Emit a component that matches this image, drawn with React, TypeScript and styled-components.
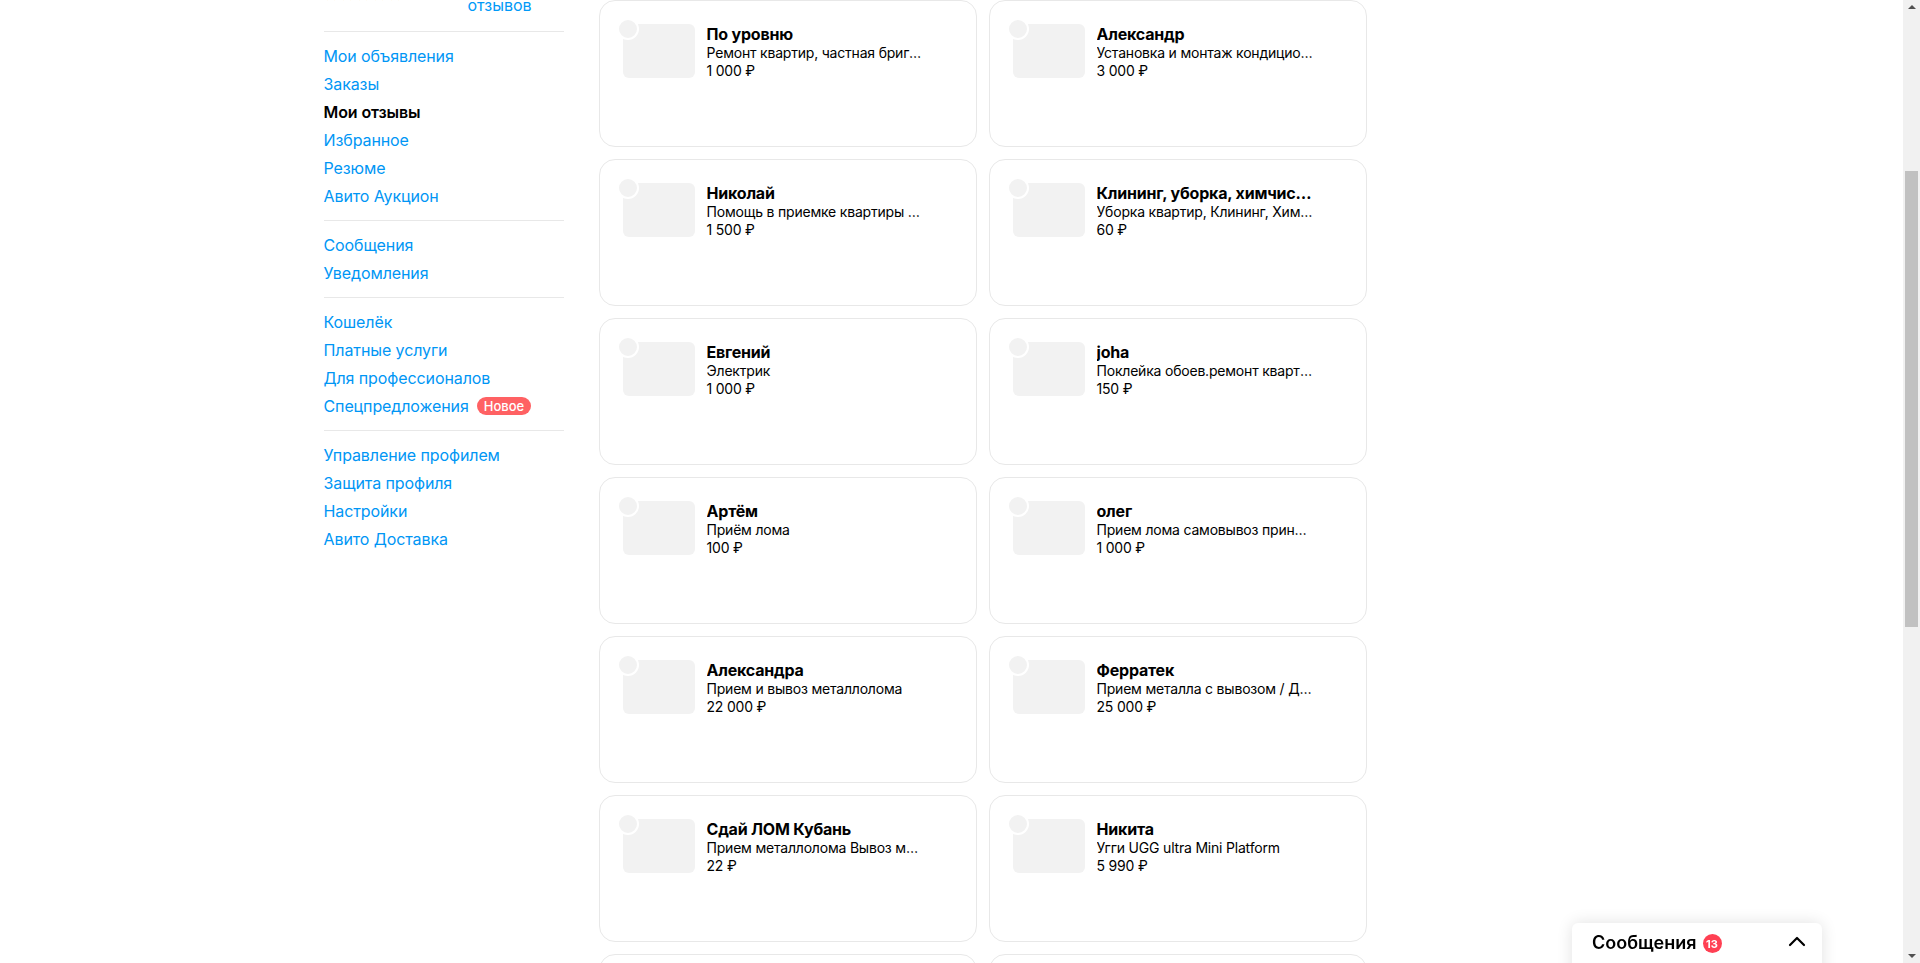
import React from 'react';
import styled, { createGlobalStyle } from 'styled-components';

const GlobalStyle = createGlobalStyle`
  html, body {
    margin: 0;
    padding: 0;
    background: #fff;
    overflow: hidden;
  }
  body {
    font-family: Inter, 'Noto Sans', 'Liberation Sans', sans-serif;
    color: #000;
  }
  * {
    box-sizing: border-box;
  }
`;

const Screen = styled.div`
  display: flex;
  height: 963px;
  overflow: hidden;
`;

const Page = styled.div`
  flex: 1;
  overflow: hidden;
`;

const Container = styled.div`
  width: 1256px;
  margin: 0 auto;
  display: flex;
  gap: 35px;
  align-items: flex-start;
`;

const Sidebar = styled.aside`
  width: 240px;
  flex: none;
`;

// rating block sits mostly above the visible part of the page
const ProfileTail = styled.div`
  display: grid;
  grid-template-columns: 144px 1fr;
  align-items: end;
  margin-top: -25px;
  padding-bottom: 16px;
`;

const Stars = styled.div`
  display: flex;
  gap: 2px;
  margin-bottom: 13px;
  color: #ffb021;
`;

const ReviewsLink = styled.a`
  font-size: 16px;
  line-height: 20px;
  color: #0099f7;
  text-decoration: none;
  display: block;
`;

const Divider = styled.hr`
  margin: 0;
  border: none;
  border-top: 1px solid #e8e8e8;
`;

const MenuSection = styled.ul`
  list-style: none;
  margin: 0;
  padding: 10px 0;
`;

const MenuItem = styled.li<{ $active?: boolean }>`
  display: flex;
  align-items: center;
  gap: 8px;
  height: 28px;
  font-size: 16px;
  line-height: 28px;
  color: ${p => (p.$active ? '#000' : '#0096f5')};
  font-weight: ${p => (p.$active ? 600 : 400)};
  letter-spacing: -0.1px;
  white-space: nowrap;
`;

const NewBadge = styled.span`
  display: inline-flex;
  align-items: center;
  height: 18px;
  padding: 0 7px;
  border-radius: 9px;
  background: #ff6163;
  color: #fff;
  font-size: 13px;
  font-weight: 500;
  line-height: 18px;
  letter-spacing: 0;
`;

const Grid = styled.div`
  display: grid;
  grid-template-columns: repeat(2, 378px);
  gap: 12px;
`;

const Card = styled.div`
  height: 147px;
  border: 1px solid #e8e8e8;
  border-radius: 16px;
  padding: 23px 23px;
  display: flex;
  align-items: flex-start;
  gap: 12px;
  background: #fff;
`;

const Thumb = styled.div`
  position: relative;
  width: 72px;
  height: 54px;
  flex: none;
  border-radius: 6px;
  background: #f2f2f2;
`;

const Avatar = styled.span`
  position: absolute;
  left: -6px;
  top: -6px;
  width: 22px;
  height: 22px;
  border-radius: 50%;
  background: #f2f2f2;
  border: 2px solid #fff;
`;

const Info = styled.div`
  width: 218px;
  min-width: 0;
  letter-spacing: -0.2px;
`;

const Title = styled.div`
  font-size: 16px;
  line-height: 20px;
  font-weight: 700;
  white-space: nowrap;
  overflow: hidden;
  text-overflow: ellipsis;
`;

const Subtitle = styled.div`
  font-size: 14px;
  line-height: 18px;
  white-space: nowrap;
  overflow: hidden;
  text-overflow: ellipsis;
`;

const Price = styled.div`
  font-size: 14px;
  line-height: 18px;
`;

const Scrollbar = styled.div`
  width: 17px;
  flex: none;
  background: #f1f1f1;
  position: relative;
  display: flex;
  flex-direction: column;
  align-items: center;
  justify-content: space-between;
  padding: 5px 0;
`;

const ScrollThumb = styled.div`
  position: absolute;
  left: 2px;
  right: 2px;
  top: 171px;
  height: 456px;
  background: #c1c1c1;
`;

const Arrow = styled.span<{ $down?: boolean }>`
  width: 0;
  height: 0;
  border-left: 4px solid transparent;
  border-right: 4px solid transparent;
  ${p =>
    p.$down
      ? 'border-top: 4px solid #505050;'
      : 'border-bottom: 4px solid #505050;'}
`;

const ChatDock = styled.div`
  position: fixed;
  left: 1572px;
  bottom: -20px;
  width: 250px;
  height: 60px;
  background: #fff;
  border-radius: 6px;
  box-shadow: 0 0 16px rgba(0, 0, 0, 0.12);
  display: flex;
  align-items: flex-start;
  padding: 9px 16px 0 20px;
`;

const DockTitle = styled.span`
  font-size: 18px;
  font-weight: 600;
  line-height: 22px;
`;

const DockCount = styled.span`
  margin-left: 6px;
  margin-top: 2px;
  width: 19px;
  height: 19px;
  border-radius: 50%;
  background: #ff4053;
  color: #fff;
  font-size: 11px;
  font-weight: 700;
  display: flex;
  align-items: center;
  justify-content: center;
`;

const DockToggle = styled.span`
  margin-left: auto;
  margin-top: 3px;
  display: flex;
`;

type Item = { title: string; text: string; price: string };

const items: Item[] = [
  { title: 'По уровню', text: 'Ремонт квартир, частная бригада', price: '1 000 ₽' },
  { title: 'Александр', text: 'Установка и монтаж кондиционеров', price: '3 000 ₽' },
  { title: 'Николай', text: 'Помощь в приемке квартиры в новостройке', price: '1 500 ₽' },
  { title: 'Клининг, уборка, химчистка', text: 'Уборка квартир, Клининг, Химчистка', price: '60 ₽' },
  { title: 'Евгений', text: 'Электрик', price: '1 000 ₽' },
  { title: 'joha', text: 'Поклейка обоев.ремонт квартир', price: '150 ₽' },
  { title: 'Артём', text: 'Приём лома', price: '100 ₽' },
  { title: 'олег', text: 'Прием лома самовывоз принимаем', price: '1 000 ₽' },
  { title: 'Александра', text: 'Прием и вывоз металлолома', price: '22 000 ₽' },
  { title: 'Ферратек', text: 'Прием металла с вывозом / Демонтаж', price: '25 000 ₽' },
  { title: 'Сдай ЛОМ Кубань', text: 'Прием металлолома Вывоз металла', price: '22 ₽' },
  { title: 'Никита', text: 'Угги UGG ultra Mini Platform', price: '5 990 ₽' },
  { title: '', text: '', price: '' },
  { title: '', text: '', price: '' }
];

const sections: { label: string; active?: boolean; isNew?: boolean }[][] = [
  [
    { label: 'Мои объявления' },
    { label: 'Заказы' },
    { label: 'Мои отзывы', active: true },
    { label: 'Избранное' },
    { label: 'Резюме' },
    { label: 'Авито Аукцион' }
  ],
  [{ label: 'Сообщения' }, { label: 'Уведомления' }],
  [
    { label: 'Кошелёк' },
    { label: 'Платные услуги' },
    { label: 'Для профессионалов' },
    { label: 'Спецпредложения', isNew: true }
  ],
  [
    { label: 'Управление профилем' },
    { label: 'Защита профиля' },
    { label: 'Настройки' },
    { label: 'Авито Доставка' }
  ]
];

const Star = () => (
  <svg width="14" height="14" viewBox="0 0 24 24" fill="currentColor">
    <path d="M12 2l2.9 6.6 7.1.6-5.4 4.7 1.6 7.1L12 17.3 5.8 21l1.6-7.1L2 9.2l7.1-.6z" />
  </svg>
);

const Chevron = () => (
  <svg width="18" height="12" viewBox="0 0 18 12" fill="none">
    <path d="M2 10l7-7 7 7" stroke="#000" strokeWidth="2.2" strokeLinecap="round" strokeLinejoin="round" />
  </svg>
);

const App: React.FC = () => {
  return (
    <>
      <GlobalStyle />
      <Screen>
        <Page>
          <Container>
            <Sidebar>
              <ProfileTail>
                <Stars>
                  <Star />
                  <Star />
                  <Star />
                  <Star />
                  <Star />
                </Stars>
                <ReviewsLink>
                  12
                  <br />
                  отзывов
                </ReviewsLink>
              </ProfileTail>
              {sections.map((list, i) => (
                <React.Fragment key={i}>
                  <Divider />
                  <MenuSection>
                    {list.map(entry => (
                      <MenuItem key={entry.label} $active={entry.active}>
                        {entry.label}
                        {entry.isNew && <NewBadge>Новое</NewBadge>}
                      </MenuItem>
                    ))}
                  </MenuSection>
                </React.Fragment>
              ))}
            </Sidebar>
            <Grid>
              {items.map((item, i) => (
                <Card key={i}>
                  {item.title && (
                    <>
                      <Thumb>
                        <Avatar />
                      </Thumb>
                      <Info>
                        <Title>{item.title}</Title>
                        <Subtitle>{item.text}</Subtitle>
                        <Price>{item.price}</Price>
                      </Info>
                    </>
                  )}
                </Card>
              ))}
            </Grid>
          </Container>
        </Page>
        <Scrollbar>
          <Arrow />
          <ScrollThumb />
          <Arrow $down />
        </Scrollbar>
      </Screen>
      <ChatDock>
        <DockTitle>Сообщения</DockTitle>
        <DockCount>13</DockCount>
        <DockToggle>
          <Chevron />
        </DockToggle>
      </ChatDock>
    </>
  );
};

export default App;
